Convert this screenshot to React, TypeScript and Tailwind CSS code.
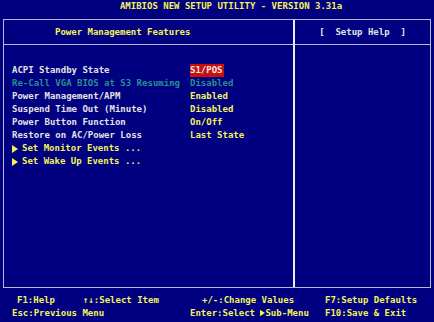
import React from 'react';

type Row = { label: string; value: string; dim?: boolean; active?: boolean };

const rows: Row[] = [
  { label: 'ACPI Standby State', value: 'S1/POS', active: true },
  { label: 'Re-Call VGA BIOS at S3 Resuming', value: 'Disabled', dim: true },
  { label: 'Power Management/APM', value: 'Enabled' },
  { label: 'Suspend Time Out (Minute)', value: 'Disabled' },
  { label: 'Power Button Function', value: 'On/Off' },
  { label: 'Restore on AC/Power Loss', value: 'Last State' },
];

const subMenus = ['Set Monitor Events ...', 'Set Wake Up Events ...'];

const Arrow = ({ gap = true }: { gap?: boolean }) => (
  <svg
    width="6"
    height="8"
    viewBox="0 0 6 8"
    className={gap ? 'inline-block mr-[4px] align-[-1px]' : 'inline-block align-[-1px] w-[5px]'}
  >
    <path d="M0 0 L6 4 L0 8 Z" fill="#f4f45a" />
  </svg>
);

export default function App() {
  return (
    <div
      className="w-[434px] h-[322px] bg-[#000080] flex flex-col text-[9px] leading-[13px] font-bold text-[#e4e4e4] overflow-hidden"
      style={{ fontFamily: '"DejaVu Sans Mono", "Liberation Mono", monospace' }}
    >
      {/* title */}
      <div className="h-[19px] flex items-start justify-center pl-[28px] text-[#f4f45a] whitespace-pre">
        AMIBIOS NEW SETUP UTILITY - VERSION 3.31a
      </div>

      {/* main box */}
      <div className="mx-[3px] h-[269px] border border-[#b8b8d8] grid grid-cols-[291px_1fr]">
        <div className="flex flex-col border-r-2 border-[#ececf4]">
          <div className="h-[25px] border-b border-[#b8b8d8] flex items-center pl-[51px] text-[#f4f45a]">
            Power Management Features
          </div>
          <div className="pt-[19px] pl-[8px] flex flex-col">
            {rows.map(r => (
              <div key={r.label} className="grid grid-cols-[178px_1fr] h-[13px] items-center whitespace-pre">
                <span className={r.dim ? 'text-[#259090]' : ''}>{r.label}</span>
                <span>
                  <span
                    className={
                      r.active
                        ? 'bg-[#c81010] text-[#f4e8e8] inline-block h-[13px] pr-[1px]'
                        : r.dim
                        ? 'text-[#259090]'
                        : 'text-[#f4f45a]'
                    }
                  >
                    {r.value}
                  </span>
                </span>
              </div>
            ))}
            {subMenus.map(s => (
              <div key={s} className="h-[13px] flex items-center text-[#f4f45a] whitespace-pre">
                <Arrow />
                {s}
              </div>
            ))}
          </div>
        </div>
        <div className="flex flex-col">
          <div className="h-[25px] border-b border-[#b8b8d8] flex items-center justify-center whitespace-pre">
            [  Setup Help  ]
          </div>
        </div>
      </div>

      {/* footer */}
      <div className="pt-[6px] text-[#f4f45a] whitespace-pre">
        <div className="h-[13px] flex items-center pl-[17px]">
          <span className="w-[66px]">F1:Help</span>
          <span className="w-[119px]">↑↓:Select Item</span>
          <span className="w-[123px]">+/-:Change Values</span>
          <span>F7:Setup Defaults</span>
        </div>
        <div className="h-[13px] flex items-center pl-[12px]">
          <span className="w-[178px]">Esc:Previous Menu</span>
          <span className="w-[135px]">
            Enter:Select <Arrow gap={false} />Sub-Menu
          </span>
          <span>F10:Save &amp; Exit</span>
        </div>
      </div>
    </div>
  );
}
